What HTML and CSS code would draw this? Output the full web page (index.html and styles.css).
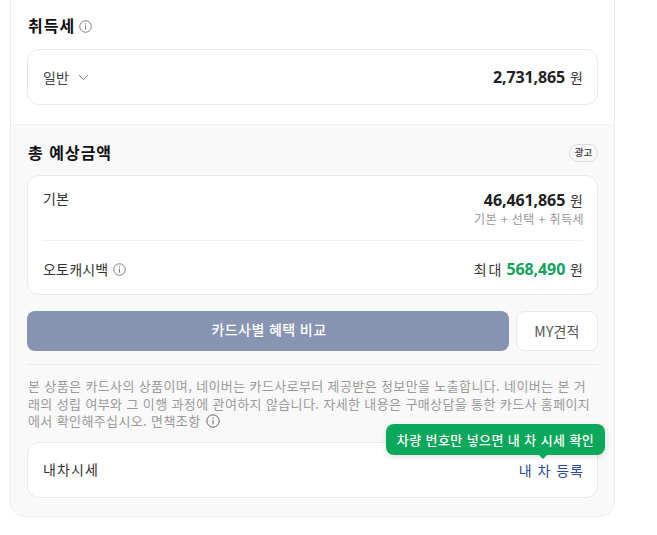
FILE: index.html
```html
<!DOCTYPE html>
<html lang="ko">
<head>
<meta charset="utf-8">
<title>취득세</title>
<link rel="stylesheet" href="styles.css">
</head>
<body>
<main class="panel">
  <section class="tax">
    <h2 class="title">취득세
      <svg class="info" viewBox="0 0 14 14"><circle cx="7" cy="7" r="6.2"/><path d="M7 6v4.4M7 3.6v1.3"/></svg>
    </h2>
    <div class="card row tax-card">
      <div class="select">일반
        <svg class="chev" viewBox="0 0 12 7"><path d="M1 1l5 5 5-5"/></svg>
      </div>
      <div class="price"><b>2,731,865</b> 원</div>
    </div>
  </section>
  <section class="total">
    <div class="total-head">
      <h2 class="title">총 예상금액</h2>
      <span class="ad">광고</span>
    </div>
    <div class="card sum-card">
      <div class="row base">
        <span class="label">기본</span>
        <div class="base-right">
          <div class="price"><b>46,461,865</b> 원</div>
          <div class="sub">기본 + 선택 + 취득세</div>
        </div>
      </div>
      <div class="row cash">
        <span class="label">오토캐시백
          <svg class="info" viewBox="0 0 14 14"><circle cx="7" cy="7" r="6.2"/><path d="M7 6v4.4M7 3.6v1.3"/></svg>
        </span>
        <div class="price"><span class="max">최대</span> <b class="green">568,490</b> 원</div>
      </div>
    </div>
    <div class="actions">
      <button class="btn-main">카드사별 혜택 비교</button>
      <button class="btn-sub">MY견적</button>
    </div>
    <p class="note">본 상품은 카드사의 상품이며, 네이버는 카드사로부터 제공받은 정보만을 노출합니다. 네이버는 본 거래의 성립 여부와 그 이행 과정에 관여하지 않습니다. 자세한 내용은 구매상담을 통한 카드사 홈페이지에서 확인해주십시오. 면책조항
      <svg class="info" viewBox="0 0 14 14"><circle cx="7" cy="7" r="6.2"/><path d="M7 6v4.4M7 3.6v1.3"/></svg>
    </p>
    <div class="card row my-car">
      <span class="label wide">내차시세</span>
      <a class="link" href="#">내 차 등록</a>
      <div class="tooltip">차량 번호만 넣으면 내 차 시세 확인</div>
    </div>
  </section>
</main>
</body>
</html>
```
FILE: styles.css
```css
* { box-sizing: border-box; }
html, body { margin: 0; padding: 0; background: #fff; }
body {
  font-family: "Noto Sans CJK KR", "Noto Sans", sans-serif;
  color: #222;
  font-size: 14px;
}
.panel {
  width: 605px;
  margin: 0 0 18px 10px;
  border: 1px solid #ececec;
  border-top: 0;
  border-radius: 0 0 16px 16px;
  overflow: hidden;
}
.tax { padding: 14px 16px 19px; height: 124px; background: #fff; }
.total {
  padding: 16px 16px 18px;
  background: #f9f9f9;
  border-top: 1px solid #f3f3f3;
  height: 392px;
}
.title {
  margin: 0;
  padding-left: 1px;
  font-size: 16px;
  font-weight: 700;
  line-height: 22px;
  letter-spacing: 1px;
  color: #111;
  display: flex;
  align-items: center;
  gap: 4px;
}
.info {
  width: 13px;
  height: 13px;
  fill: none;
  stroke: #777;
  stroke-width: 1;
  vertical-align: -2px;
}
.title .info { margin-top: 2px; }
.card {
  background: #fff;
  border: 1px solid #e9e9e9;
  border-radius: 12px;
}
.row { display: flex; justify-content: space-between; align-items: center; }
.tax-card { height: 56px; margin-top: 13px; padding: 0 14px 0 15px; }
.select { display: flex; align-items: center; gap: 9px; color: #444; line-height: 20px; margin-top: -1px; }
.chev { width: 11px; height: 6.5px; fill: none; stroke: #777; stroke-width: 1; margin-top: 2px; }
.price { color: #333; font-size: 14px; line-height: 20px; }
.price b { font-size: 16px; font-weight: 700; color: #222; font-family: "Noto Sans", sans-serif; letter-spacing: -.1px; margin-right: 1px; }
.price b.green { color: #12a35c; }
.max { letter-spacing: 2px; margin-right: -1px; }
.total-head { display: flex; justify-content: space-between; align-items: center; height: 22px; }
.ad {
  width: 29px;
  height: 18px;
  border: 1px solid #ddd;
  border-radius: 9px;
  font-size: 9.5px;
  font-weight: 700;
  line-height: 15px;
  text-align: center;
  color: #555;
  margin-top: 1px;
}
.sum-card { height: 120px; margin-top: 12px; padding: 0 14px 0 15px; }
.base {
  align-items: flex-start;
  height: 65px;
  padding-top: 12px;
  border-bottom: 1px solid #f1f1f1;
}
.label { color: #333; line-height: 20px; display: flex; align-items: center; gap: 5px; letter-spacing: .2px; }
.wide { letter-spacing: 1.1px; margin-top: -1px; }
.base-right { text-align: right; margin-top: 2px; }
.base-right .price { line-height: 21px; }
.sub { font-size: 12px; line-height: 15px; color: #999; letter-spacing: .45px; margin-right: -1px; }
.cash { height: 53px; padding-top: 3px; }
.actions { display: flex; gap: 7px; margin-top: 16px; }
.btn-main, .btn-sub {
  font-family: inherit;
  font-size: 14px;
  height: 40px;
  border-radius: 8px;
}
.btn-main {
  flex: 1;
  background: #8794b2;
  border: 0;
  color: #fff;
  font-weight: 500;
  letter-spacing: .4px;
  padding: 0 0 4px 2px;
}
.btn-sub {
  width: 82px;
  background: #fff;
  border: 1px solid #e9e9e9;
  color: #555;
  padding: 0;
  letter-spacing: .2px;
}
.note {
  margin: 13px 0 0;
  padding: 12px 0 0 1px;
  border-top: 1px solid #ececec;
  font-size: 13px;
  line-height: 17.6px;
  letter-spacing: .38px;
  color: #999;
  word-break: break-all;
}
.note .info { stroke: #666; width: 14px; height: 14px; margin-left: 1px; }
.my-car {
  position: relative;
  height: 56px;
  margin-top: 12px;
  padding: 0 14px 0 15px;
}
.link { color: #2a4a92; text-decoration: none; letter-spacing: 1px; margin-right: -1px; }
.tooltip {
  position: absolute;
  left: 358px;
  top: -19px;
  width: 219px;
  height: 31px;
  background: #0aa85a;
  color: #fff;
  border-radius: 8px;
  font-size: 13px;
  font-weight: 500;
  line-height: 31px;
  letter-spacing: .4px;
  text-align: center;
  box-shadow: 0 2px 6px rgba(0,0,0,.12);
  white-space: nowrap;
}
.tooltip::after {
  content: "";
  position: absolute;
  left: 153px;
  top: 31px;
  border: 4px solid transparent;
  border-top-color: #0aa85a;
  border-bottom: 0;
}
```
